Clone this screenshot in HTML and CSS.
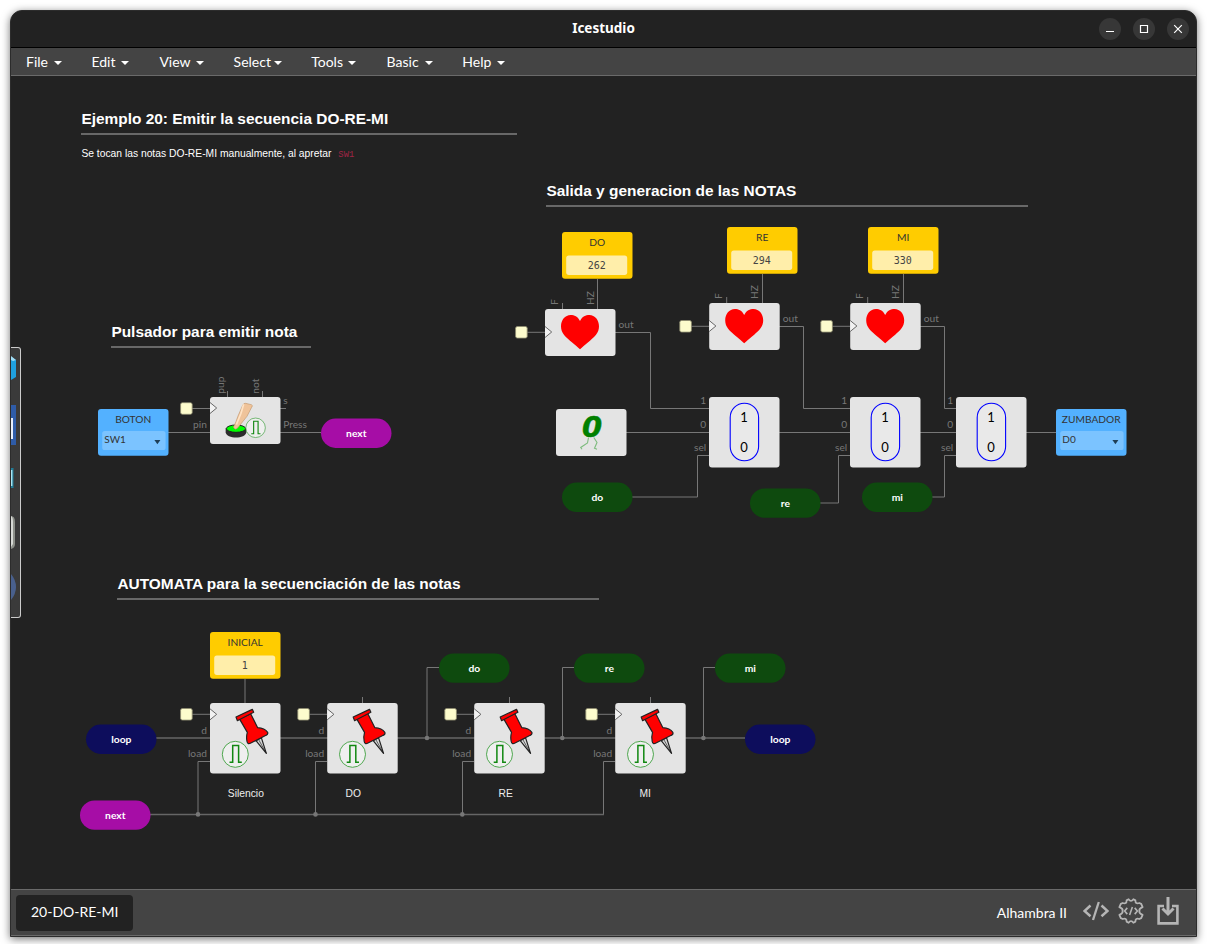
FILE: index.html
```html
<!DOCTYPE html>
<html lang="es">
<head>
<meta charset="utf-8">
<title>Icestudio</title>
<link rel="stylesheet" href="styles.css">
</head>
<body>
<div class="window">
  <header class="titlebar">
    <span class="title">Icestudio</span>
    <div class="controls">
      <span class="control"><svg viewBox="0 0 22 22"><path d="M7 13.5h8"/></svg></span>
      <span class="control"><svg viewBox="0 0 22 22"><path d="M7.5 7.5h7v7h-7z"/></svg></span>
      <span class="control"><svg viewBox="0 0 22 22"><path d="M7.2 7.2l7.6 7.6M14.8 7.2l-7.6 7.6"/></svg></span>
    </div>
  </header>
  <nav class="menu">
    <span class="item file">File<i class="caret"></i></span>
    <span class="item edit">Edit<i class="caret"></i></span>
    <span class="item view">View<i class="caret"></i></span>
    <span class="item select">Select<i class="caret"></i></span>
    <span class="item tools">Tools<i class="caret"></i></span>
    <span class="item basic">Basic<i class="caret"></i></span>
    <span class="item help">Help<i class="caret"></i></span>
  </nav>
  <main class="canvas">
    <svg class="diagram" viewBox="11 76 1185 813">
      <defs>
        <g id="pulse">
          <circle r="13" fill="#efefef" stroke="#3d9f3d" stroke-width=".9"/>
          <path d="M-5.8 8h3.2v-16.8h5.9V8h3.2" fill="none" stroke="#118811" stroke-width="1.5"/>
        </g>
        <g id="clock">
          <path d="M-18 0H0" class="wire"/>
          <rect x="-29.4" y="-5.8" width="11.6" height="11.6" rx="1.8" fill="#fdfccd" stroke="#8e8c70" stroke-width=".8"/>
        </g>
        <path id="wedge" d="M0-5.5L6.7 0L0 5.5" fill="#f2f2f2" stroke="#666" stroke-width="1"/>
        <g id="register">
          <rect class="block" width="70.5" height="70.5" rx="3"/>
          <use href="#clock" y="11.3"/><use href="#wedge" y="11.3"/>
          <g transform="scale(.3333)" stroke="#222" stroke-width="3.6" stroke-linejoin="round">
            <path d="M138 113L169 151L154 104z" fill="#d8d8d8"/><path d="M146 110L169 151" stroke-width="2"/>
            <path d="M88 47L112 88Q108 102 111 115Q113 125 121 121L168 97Q175 94 173 88Q164 75 143 74L122 32z" fill="#f00"/>
            <path d="M78 42L127 19L131 28L82 53z" fill="#f00"/>
          </g>
          <use href="#pulse" x="25.3" y="51.3"/>
          <text class="port end" x="-3.1" y="30.7">d</text>
          <text class="port end" x="-3.1" y="53.7">load</text>
        </g>
        <g id="heart">
          <rect class="block" width="70.5" height="47" rx="3"/>
          <use href="#clock" y="23.3"/><use href="#wedge" y="23"/>
          <path transform="scale(.3333)" fill="#f00" d="M105 36C98 22 88 18 77 18C60 18 48 33 48 52C48 72 60 82 75 95Q95 111 105 121Q115 111 135 95C150 82 162 72 162 52C162 33 150 18 133 18C122 18 112 22 105 36z"/>
          <path class="wire" d="M17.5-6V0"/>
          <text class="port" transform="translate(12.9 -4) rotate(-90)">F</text>
          <text class="port" transform="translate(48.8 -4) rotate(-90)">HZ</text>
          <text class="port" x="73.6" y="19">out</text>
        </g>
        <g id="mux">
          <rect class="block" width="70.5" height="70.5" rx="3"/>
          <rect x="21.2" y="6.3" width="28.4" height="57.4" rx="14.2" fill="#e9e9e9" stroke="#00f" stroke-width="1.1"/>
          <text class="bit" x="34.9" y="25.2">1</text>
          <text class="bit" x="34.9" y="55.2">0</text>
          <text class="port end" x="-2.8" y="6.8">1</text>
          <text class="port end" x="-2.8" y="31">0</text>
          <text class="port end" x="-2.8" y="54">sel</text>
        </g>
        <g id="constant">
          <rect width="70.5" height="46.8" rx="3" fill="#fc0"/>
          <rect x="4.2" y="23.4" width="61" height="19.5" rx="2.6" fill="#ffeeaa"/>
        </g>
        <g id="pinblock">
          <rect width="70.5" height="46.8" rx="3" fill="#53b1ff"/>
          <rect x="4.2" y="22" width="63.4" height="19" rx="2.6" fill="#7bc3ff"/>
          <path d="M56.4 31h6l-3 4.2z" fill="#1f3e55"/>
        </g>
        <rect id="pill" width="70.5" height="29.3" rx="14.6"/>
      </defs>

      <g class="wire">
        <path d="M168 432.5H210M280 432.5H321M280 408.5H286M227.5 391V397M262.5 391V397"/>
        <path d="M597.5 279V309M762.5 274V303M903.5 274V303M245 679V703"/>
        <path d="M615 332.5H650.5V408.5H709M779 326.5H803.5V408.5H850M920 326.5H944.5V408.5H956"/>
        <path d="M626 432.5H709M779 432.5H850M920 432.5H956M1026 432.5H1056"/>
        <path d="M632 497H697.5V455.5H709M820 503H838.5V455.5H850M932 497H944.5V455.5H956"/>
        <path d="M362.5 697V703M509.5 697V703M650.5 697V703"/>
        <path d="M427 738V667.5H439M562.5 738V667.5H574M703.5 738V667.5H715"/>
        <path d="M198 814V761.5H210M315.5 814V761.5H327M462.5 814V761.5H474M603.5 814V761.5H615"/>
        <path class="bus" d="M156 738H745M150 814.4H604"/>
      </g>
      <g fill="#777">
        <circle cx="427" cy="738" r="2.3"/><circle cx="562.3" cy="738" r="2.3"/><circle cx="703.4" cy="738" r="2.3"/>
        <circle cx="198" cy="814.4" r="2.3"/><circle cx="315.5" cy="814.4" r="2.3"/><circle cx="462.3" cy="814.4" r="2.3"/>
      </g>

      <use href="#constant" x="562" y="232"/><text class="name" x="597.2" y="246">DO</text><text class="value" x="596.7" y="269.2">262</text>
      <use href="#constant" x="727" y="227"/><text class="name" x="762.2" y="241">RE</text><text class="value" x="761.7" y="264.2">294</text>
      <use href="#constant" x="868" y="227"/><text class="name" x="903.2" y="241">MI</text><text class="value" x="902.7" y="264.2">330</text>
      <use href="#constant" x="210" y="632"/><text class="name" x="245.2" y="646">INICIAL</text><text class="value" x="244.7" y="669.2">1</text>

      <use href="#heart" x="545" y="309"/>
      <use href="#heart" x="709.2" y="303"/>
      <use href="#heart" x="850.2" y="303"/>

      <use href="#mux" x="709" y="397"/>
      <use href="#mux" x="850" y="397"/>
      <use href="#mux" x="956" y="397"/>

      <rect class="block" x="556" y="409" width="70.5" height="47" rx="3"/>
      <text class="zero" x="592" y="437">0</text>
      <path d="M588.5 437.5L587.5 443L580.7 447.5L582 449.3M593.8 437.5L597 442.5L594.5 448.3L597 449.3" fill="none" stroke="#7dbb7d" stroke-width="1.1"/>

      <use href="#pinblock" x="98" y="409"/><text class="name" x="133.2" y="423">BOTON</text><text class="choice" x="104.3" y="443">SW1</text>
      <use href="#pinblock" x="1056" y="409"/><text class="name" x="1091.2" y="423">ZUMBADOR</text><text class="choice" x="1062.3" y="443">D0</text>

      <rect class="block" x="210" y="397" width="70.5" height="47" rx="3"/>
      <use href="#clock" x="210" y="408.5"/><use href="#wedge" x="210" y="408"/>
      <g transform="translate(210 397) scale(.3333)">
        <path d="M47 94V106C49 127 107 127 109 106V94z" fill="#2c2c2c"/>
        <ellipse cx="78" cy="95" rx="29" ry="11" fill="#0f0" stroke="#222" stroke-width="3"/>
        <path d="M70 91Q78 76 84 57L98 25Q101 18 107 19L124 23Q130 25 125 31L111 58L83 93Q76 101 70 91z" fill="#efc39a" stroke="#b68558" stroke-width="1.5"/>
        <path d="M101 22L93 49L79 83" fill="none" stroke="#ffe3c5" stroke-width="5"/>
      </g>
      <use href="#pulse" transform="translate(255.6 427.8) scale(.75)"/>
      <text class="port" transform="translate(223.6 393.7) rotate(-90)">pup</text>
      <text class="port" transform="translate(258.6 393.7) rotate(-90)">not</text>
      <text class="port end" x="206.9" y="428">pin</text>
      <text class="port" x="283.2" y="404">s</text>
      <text class="port" x="283.2" y="428">Press</text>

      <use href="#register" x="210" y="703"/>
      <use href="#register" x="327.2" y="703"/>
      <use href="#register" x="474.2" y="703"/>
      <use href="#register" x="615.2" y="703"/>

      <g fill="#a60da6"><use href="#pill" x="321" y="418.6"/><use href="#pill" x="80" y="800.5"/></g>
      <g fill="#0e4a0e">
        <use href="#pill" x="562" y="482.6"/><use href="#pill" x="750" y="488.5"/><use href="#pill" x="862" y="482.6"/>
        <use href="#pill" x="439" y="653.5"/><use href="#pill" x="574" y="653.5"/><use href="#pill" x="715" y="653.5"/>
      </g>
      <g fill="#0d0d5c"><use href="#pill" x="86" y="724.6"/><use href="#pill" x="745" y="724.6"/></g>
      <g class="tag">
        <text x="356.3" y="437">next</text><text x="115.3" y="819">next</text>
        <text x="597.3" y="501">do</text><text x="785.3" y="507">re</text><text x="897.3" y="501">mi</text>
        <text x="474.3" y="672">do</text><text x="609.3" y="672">re</text><text x="750.3" y="672">mi</text>
        <text x="121.3" y="743">loop</text><text x="780.3" y="743">loop</text>
      </g>
      <g class="caption">
        <text x="227.8" y="796.8">Silencio</text><text x="345.5" y="796.8">DO</text>
        <text x="498.5" y="796.8">RE</text><text x="639.5" y="796.8">MI</text>
      </g>
    </svg>

    <section class="note intro"><h2>Ejemplo 20: Emitir la secuencia DO-RE-MI</h2><p>Se tocan las notas DO-RE-MI manualmente, al apretar <code>SW1</code></p></section>
    <section class="note output"><h2>Salida y generacion de las NOTAS</h2></section>
    <section class="note button"><h2>Pulsador para emitir nota</h2></section>
    <section class="note automaton"><h2>AUTOMATA para la secuenciación de las notas</h2></section>

    <aside class="dock">
      <svg viewBox="0 0 9 269">
        <path d="M0 9L5 12V29L0 32z" fill="#1fa0de"/><path d="M0 8L5 12L2 13L0 12z" fill="#9fdcf5"/>
        <path d="M0 57H5V97H0z" fill="#2f5ca8"/><path d="M0 70H2V91H0z" fill="#e8eefa"/>
        <path d="M0 120H2.5V140H0z" fill="#227c97"/><path d="M0 122H1.4V138H0z" fill="#a9e4f2"/>
        <path d="M0 168Q4 168 4 174V196Q4 200 0 201z" fill="#8c8f89"/><path d="M0 168Q2 169 2 174V196L0 199z" fill="#d7d9d5"/>
        <path d="M0 226Q5 232 5 239Q5 246 0 252z" fill="#49608d"/>
      </svg>
    </aside>
  </main>
  <footer class="statusbar">
    <span class="project">20-DO-RE-MI</span>
    <span class="board">Alhambra II</span>
    <svg class="tool code" viewBox="0 0 26 20"><path d="M7.5 4.5L1.5 10L7.5 15.2M18.5 4.5L24.5 10L18.5 15.2" stroke-width="2.5"/><path d="M15.8 1L10 19" stroke-width="2.3"/></svg>
    <svg class="tool gear" viewBox="0 0 26 26"><path d="M8.6 2.4L10.6 1.3Q13 4.4 15.4 1.3L17.4 2.4Q17.3 6.4 21.3 5L23.2 5.8L24.6 9.2Q20.8 10.6 21.4 13Q20.8 15.4 24.6 16.8L23.2 20.2L21.3 21Q17.3 19.6 17.4 23.6L15.4 24.7Q13 21.6 10.6 24.7L8.6 23.6Q8.7 19.6 4.7 21L2.8 20.2L1.4 16.8Q5.2 15.4 4.6 13Q5.2 10.6 1.4 9.2L2.8 5.8L4.7 5Q8.7 6.4 8.6 2.4z" stroke-width="1.8" stroke-linejoin="round"/><path d="M9.3 9.9L6.6 13L9.3 16.1M16.7 9.9L19.4 13L16.7 16.1M14.4 9L11.6 17" stroke-width="1.6"/></svg>
    <svg class="tool upload" viewBox="0 0 22 28"><path d="M7 9H1.6V26.4H20.4V9H15" stroke-width="2.6"/><path d="M11 0V17M5.5 11.5L11 17L16.5 11.5" stroke-width="3"/></svg>
  </footer>
</div>
</body>
</html>
```
FILE: styles.css
```css
* { box-sizing: border-box; }
body { margin: 0; padding: 10px; height: 944px; overflow: hidden; background: #fff; font-family: Lato, sans-serif; }
.window { width: 1187px; height: 927px; display: flex; flex-direction: column; background: #222; border: 1px solid #2c2c2c; border-radius: 12px 12px 0 0; overflow: hidden; box-shadow: 0 2px 9px rgba(0,0,0,.55); }
.titlebar { height: 37px; flex: none; display: grid; grid-template-columns: 1fr auto 1fr; align-items: center; border-bottom: 1px solid #000; color: #fff; }
.title { grid-column: 2; padding-bottom: 2px; font: bold 13.5px "Noto Sans", sans-serif; }
.controls { justify-self: end; display: flex; gap: 12px; padding-right: 7px; }
.control { width: 22px; height: 22px; border-radius: 50%; background: #373737; }
.control svg { display: block; fill: none; stroke: #fff; stroke-width: 1.2; }
.menu { height: 28px; flex: none; display: flex; align-items: center; padding-left: 15px; background: #444; border-bottom: 1px solid #6a6a6a; color: #fff; font-size: 14px; }
.item { display: flex; align-items: center; justify-content: space-between; height: 100%; }
.file { width: 36px; margin-right: 29.4px; }
.edit { width: 38px; margin-right: 30px; }
.view { width: 45px; margin-right: 29.2px; }
.select { width: 48px; margin-right: 29.6px; }
.tools { width: 45px; margin-right: 30.4px; }
.basic { width: 46px; margin-right: 29.8px; }
.help { width: 43px; }
.caret { border: 4px solid transparent; border-top-color: #fff; border-bottom: 0; margin-top: 2px; }
.canvas { position: relative; flex: none; height: 813px; overflow: hidden; }
.diagram { display: block; width: 1185px; height: 813px; font-family: Lato, sans-serif; }
.wire { fill: none; stroke: #777; stroke-width: 1; }
.bus { stroke: #666; stroke-width: 1.5; }
.block { fill: #e4e4e4; }
.port { font-size: 10.2px; fill: #777; }
.end { text-anchor: end; }
.name { font-size: 10.2px; fill: #333; text-anchor: middle; }
.choice { font-size: 10px; fill: #333; }
.value { font: 10px "DejaVu Sans Mono", monospace; fill: #444; text-anchor: middle; }
.bit { font-size: 13px; fill: #000; text-anchor: middle; }
.zero { font: italic bold 29px "DejaVu Sans", sans-serif; fill: #008000; stroke: #008000; stroke-width: .5px; text-anchor: middle; }
.tag { font-size: 10.3px; font-weight: bold; fill: #fff; text-anchor: middle; }
.caption { font: 10.3px "Liberation Sans", sans-serif; fill: #eee; }
.note { position: absolute; color: #fff; font-family: "Liberation Sans", sans-serif; }
.note h2 { margin: 0; height: 26px; padding: 1px 0 0 .4px; font-size: 15.43px; line-height: 18px; border-bottom: 2px solid #686868; white-space: nowrap; }
.note p { margin: 13px 0 0 .4px; font-size: 10.3px; line-height: 12px; }
.note code { margin-left: 4px; font: 8.8px "Liberation Mono", monospace; color: #a02545; }
.intro { left: 70px; top: 33px; width: 436px; }
.output { left: 535px; top: 105px; width: 482px; }
.button { left: 100px; top: 246px; width: 200px; }
.automaton { left: 106px; top: 498px; width: 482px; }
.dock { position: absolute; left: 0; top: 271px; width: 10px; height: 271px; background: #3a3a3a; border: 1px solid #ccc; border-left: 0; border-radius: 0 3px 3px 0; }
.dock svg { display: block; width: 9px; height: 269px; }
.statusbar { height: 47px; flex: none; display: flex; align-items: center; padding: 0 17px 0 5px; background: #444; border-top: 1px solid #6a6a6a; border-bottom: 1px solid #6a6a6a; color: #fff; font-size: 14px; }
.project { height: 36px; padding: 0 15px; line-height: 34px; background: #222; border-radius: 4px; }
.board { margin-left: auto; margin-right: 16px; padding-bottom: 1px; }
.tool { fill: none; stroke: #b5b5b5; flex: none; }
.code { width: 26px; height: 20px; margin-right: 9px; margin-bottom: 4px; }
.gear { width: 26px; height: 26px; margin-right: 13px; margin-bottom: 4px; }
.upload { width: 22px; height: 28px; margin-bottom: 4px; }
```
